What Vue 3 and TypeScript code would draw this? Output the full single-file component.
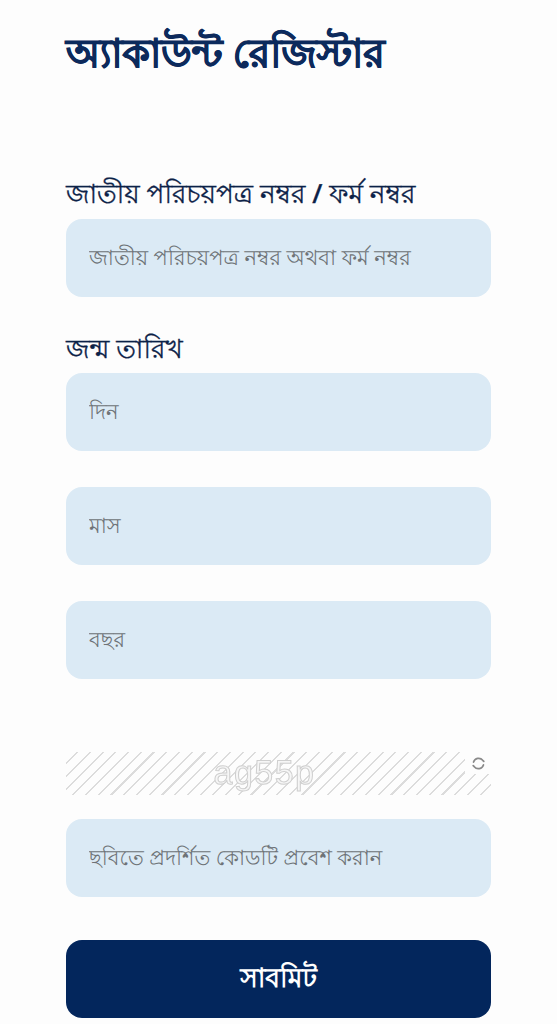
<script setup lang="ts">
const dobFields = ['দিন', 'মাস', 'বছর']
</script>

<template>
  <div class="page">
    <h1 class="title">অ্যাকাউন্ট রেজিস্টার</h1>

    <label class="label nid-label">জাতীয় পরিচয়পত্র নম্বর / ফর্ম নম্বর</label>
    <input class="field" placeholder="জাতীয় পরিচয়পত্র নম্বর অথবা ফর্ম নম্বর" />

    <label class="label dob-label">জন্ম তারিখ</label>
    <div class="dob">
      <input v-for="f in dobFields" :key="f" class="field" :placeholder="f" />
    </div>

    <div class="captcha">
      <span class="captcha-text">ag55p</span>
      <span class="refresh-box">
        <svg class="refresh" viewBox="0 0 24 24" fill="none" stroke="#8a8a8a" stroke-width="2.4" stroke-linecap="round">
          <path d="M5 10a7.5 7.5 0 0 1 13-2.5l1.5 1.5" />
          <path d="M19 14a7.5 7.5 0 0 1-13 2.5L4.500 15" />
        </svg>
      </span>
    </div>

    <input class="field" placeholder="ছবিতে প্রদর্শিত কোডটি প্রবেশ করান" />

    <button class="submit">সাবমিট</button>
  </div>
</template>

<style scoped>
.page {
  box-sizing: border-box;
  height: 1024px;
  overflow: hidden;
  padding: 27px 66px 0 66px;
  background: #fdfdfd;
  font-family: "Noto Sans", "Liberation Sans", sans-serif;
  text-rendering: geometricPrecision;
  display: flex;
  flex-direction: column;
}

.title {
  margin: 0;
  font-size: 39.150px;
  line-height: 52px;
  font-weight: 700;
  color: #0c2a5c;
  -webkit-text-stroke: 0.7px #0c2a5c;
}

.label {
  display: block;
  font-size: 26.250px;
  line-height: 36px;
  font-weight: 500;
  color: #0b2147;
  -webkit-text-stroke: 0.35px #0b2147;
}

.nid-label {
  margin-top: 96px;
  margin-bottom: 8px;
}

.dob-label {
  margin-top: 33px;
  margin-bottom: 7px;
}

.field {
  box-sizing: border-box;
  width: 100%;
  height: 78px;
  flex: none;
  border: none;
  border-radius: 16px;
  padding: 0 23px 1px;
  background: #dbeaf5;
  font-family: inherit;
  font-size: 21.050px;
  text-rendering: geometricPrecision;
  color: #333;
  outline: none;
}

.field::placeholder {
  color: #6e7377;
  opacity: 1;
}

.dob {
  display: flex;
  flex-direction: column;
  gap: 36px;
}

.captcha {
  position: relative;
  box-sizing: border-box;
  height: 43px;
  margin-top: 73px;
  margin-bottom: 24px;
  padding-right: 28px;
  display: flex;
  align-items: center;
  justify-content: center;
  background: repeating-linear-gradient(135deg, #fdfdfd 0 7.500px, #dcdcdc 7.500px 9px);
}

.captcha-text {
  font-family: "Liberation Sans", sans-serif;
  font-size: 34px;
  line-height: 43px;
  letter-spacing: 1.500px;
  color: #f6f6f6;
  -webkit-text-stroke: 1px #cfcfcf;
  filter: blur(0.4px);
}

.refresh-box {
  position: absolute;
  top: 0;
  right: 0;
  width: 26px;
  height: 22px;
  display: flex;
  align-items: center;
  justify-content: center;
  background: #fdfdfd;
}

.refresh {
  width: 17px;
  height: 17px;
}

.submit {
  height: 78px;
  flex: none;
  margin-top: 43px;
  padding: 3px 0 0;
  border: none;
  border-radius: 16px;
  background: #03265c;
  color: #fff;
  font-family: inherit;
  font-size: 26.500px;
  font-weight: 700;
  text-rendering: geometricPrecision;
}
</style>
